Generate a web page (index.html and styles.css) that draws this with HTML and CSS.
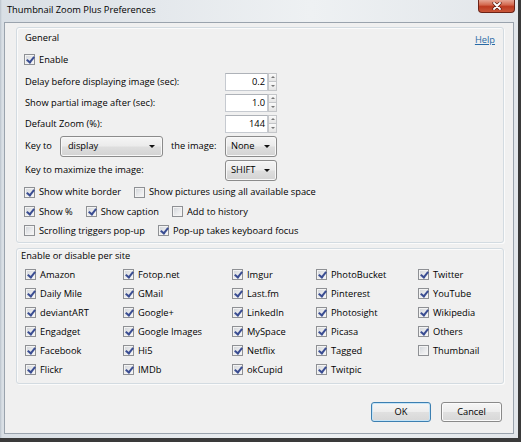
FILE: index.html
```html
<!DOCTYPE html>
<html>
<head>
<meta charset="utf-8">
<title>Thumbnail Zoom Plus Preferences</title>
<link rel="stylesheet" href="styles.css">
</head>
<body>
<div class="window">
  <div class="titlebar">
    <span class="title">Thumbnail Zoom Plus Preferences</span>
    <span class="close">
      <svg width="10" height="8" viewBox="0 0 10 8"><path d="M2 1 L8 7 M8 1 L2 7" stroke="#5a1a10" stroke-width="3.2" stroke-linecap="round"/><path d="M2 1 L8 7 M8 1 L2 7" stroke="#ffffff" stroke-width="1.8" stroke-linecap="round"/></svg>
    </span>
  </div>
  <div class="client">
    <div class="group general">
      <div class="caption-row"><span class="caption">General</span><span class="help">Help</span></div>
      <div class="enable-row"><span class="check"><span class="cb on"></span>Enable</span></div>
      <div class="frow"><span class="lbl">Delay before displaying image (sec):</span><span class="num"><span class="field">0.2</span><span class="spin"><i class="up"></i><i class="down"></i></span></span></div>
      <div class="frow"><span class="lbl">Show partial image after (sec):</span><span class="num"><span class="field">1.0</span><span class="spin"><i class="up"></i><i class="down"></i></span></span></div>
      <div class="frow"><span class="lbl">Default Zoom (%):</span><span class="num"><span class="field">144</span><span class="spin"><i class="up"></i><i class="down"></i></span></span></div>
      <div class="frow tall">
        <span class="lbl keycell"><span>Key to</span><span class="select sel-display"><span>display</span><span class="arrow"></span></span><span>the image:</span></span>
        <span class="select sel-small"><span>None</span><span class="arrow"></span></span>
      </div>
      <div class="frow tall"><span class="lbl">Key to maximize the image:</span><span class="select sel-small"><span>SHIFT</span><span class="arrow"></span></span></div>
      <div class="cbrow r1"><span class="check"><span class="cb on"></span>Show white border</span><span class="check"><span class="cb"></span>Show pictures using all available space</span></div>
      <div class="cbrow"><span class="check"><span class="cb on"></span>Show %</span><span class="check"><span class="cb on"></span>Show caption</span><span class="check"><span class="cb"></span>Add to history</span></div>
      <div class="cbrow"><span class="check"><span class="cb"></span>Scrolling triggers pop-up</span><span class="check"><span class="cb on"></span>Pop-up takes keyboard focus</span></div>
    </div>
    <div class="group sites">
      <div class="sites-caption">Enable or disable per site</div>
      <div class="site-grid">
        <span class="check"><span class="cb on"></span>Amazon</span>
        <span class="check"><span class="cb on"></span>Daily Mile</span>
        <span class="check"><span class="cb on"></span>deviantART</span>
        <span class="check"><span class="cb on"></span>Engadget</span>
        <span class="check"><span class="cb on"></span>Facebook</span>
        <span class="check"><span class="cb on"></span>Flickr</span>
        <span class="check"><span class="cb on"></span>Fotop.net</span>
        <span class="check"><span class="cb on"></span>GMail</span>
        <span class="check"><span class="cb on"></span>Google+</span>
        <span class="check"><span class="cb on"></span>Google Images</span>
        <span class="check"><span class="cb on"></span>Hi5</span>
        <span class="check"><span class="cb on"></span>IMDb</span>
        <span class="check"><span class="cb on"></span>Imgur</span>
        <span class="check"><span class="cb on"></span>Last.fm</span>
        <span class="check"><span class="cb on"></span>LinkedIn</span>
        <span class="check"><span class="cb on"></span>MySpace</span>
        <span class="check"><span class="cb on"></span>Netflix</span>
        <span class="check"><span class="cb on"></span>okCupid</span>
        <span class="check"><span class="cb on"></span>PhotoBucket</span>
        <span class="check"><span class="cb on"></span>Pinterest</span>
        <span class="check"><span class="cb on"></span>Photosight</span>
        <span class="check"><span class="cb on"></span>Picasa</span>
        <span class="check"><span class="cb on"></span>Tagged</span>
        <span class="check"><span class="cb on"></span>Twitpic</span>
        <span class="check"><span class="cb on"></span>Twitter</span>
        <span class="check"><span class="cb on"></span>YouTube</span>
        <span class="check"><span class="cb on"></span>Wikipedia</span>
        <span class="check"><span class="cb on"></span>Others</span>
        <span class="check"><span class="cb"></span>Thumbnail</span>
      </div>
    </div>
    <div class="buttons">
      <span class="btn btn-default">OK</span>
      <span class="btn">Cancel</span>
    </div>
  </div>
</div>
</body>
</html>
```

FILE: styles.css
```css
* { box-sizing: border-box; }
html, body { margin: 0; padding: 0; }
body {
  background: #ffffff;
  width: 524px;
  height: 444px;
  overflow: hidden;
  font-family: "Open Sans", "Noto Sans", sans-serif;
  font-size: 9.3px;
  line-height: 12px;
  color: #000;
}
.window {
  width: 521px;
  height: 442px;
  border-right: 3px solid #3a3a3a;
  border-bottom: 4px solid #3a3a3a;
  background: linear-gradient(to right, #b9c2cb 0, #d9dfe5 2px, #e4e8ec 30%, #eef1f3 60%, #e2e6ea 100%);
  display: flex;
  flex-direction: column;
}
.titlebar {
  height: 22px;
  flex: none;
  display: flex;
  align-items: flex-start;
  padding-left: 7px;
}
.title { margin-top: 4px; color: #000; }
.close {
  margin-left: auto;
  margin-right: 3px;
  width: 37px;
  height: 13px;
  border: 1px solid #6b2216;
  border-top: none;
  border-radius: 0 0 4px 4px;
  background: linear-gradient(#e6a594 0, #d46a50 40%, #bd3a20 55%, #c9573a 100%);
  display: flex;
  align-items: center;
  justify-content: center;
}
.close svg { display: block; }
.client {
  margin-left: 4px;
  width: 510px;
  height: 412px;
  flex: none;
  border: 1px solid #9aa3ad;
  background: #f0f0f0;
  padding: 4px 9px 0 11px;
  display: flex;
  flex-direction: column;
}
.group {
  border: 1px solid #d3dbe1;
  border-radius: 3px;
  box-shadow: inset 1px 1px 0 #fbfbfb, 1px 1px 0 #fbfbfb;
  padding: 0 8px 0 7px;
}
.general { height: 216px; flex: none; }
.caption-row {
  height: 20px;
  display: flex;
  align-items: center;
  justify-content: space-between;
}
.caption { margin-left: 1px; }
.help {
  color: #2a6aa5;
  text-decoration: underline;
  margin-top: 4px;
}
.enable-row { height: 23px; display: flex; align-items: center; }
.frow { height: 21px; display: flex; align-items: center; }
.frow.tall { height: 24px; }
.lbl { flex: 0 0 201px; padding-left: 1px; }
.keycell { display: flex; align-items: center; gap: 8px; }
.num { display: flex; align-items: center; }
.field {
  width: 43px;
  height: 18px;
  border: 1px solid #c6cad0;
  border-top-color: #aeb2b8;
  background: #fff;
  text-align: right;
  padding-right: 2px;
  line-height: 16px;
}
.spin {
  width: 9px;
  height: 18px;
  display: flex;
  flex-direction: column;
}
.spin i {
  flex: 1;
  border: 1px solid #c4c6c9;
  background: linear-gradient(#fafafa, #e4e4e4);
  display: flex;
  align-items: center;
  justify-content: center;
}
.spin i.down { border-top: none; }
.spin i::after {
  content: "";
  width: 0;
  height: 0;
  border-left: 2px solid transparent;
  border-right: 2px solid transparent;
}
.spin i.up::after { border-bottom: 2px solid #777; }
.spin i.down::after { border-top: 2px solid #777; }
.select {
  height: 21px;
  border: 1px solid #8b8b8b;
  border-radius: 3px;
  background: linear-gradient(#f5f5f5 0, #ebebeb 48%, #dedede 52%, #d3d3d3 100%);
  box-shadow: inset 0 0 0 1px #f8f8f8;
  display: flex;
  align-items: center;
  justify-content: space-between;
  color: #000;
}
.sel-display { width: 103px; padding: 0 7px 0 7px; }
.sel-small { width: 52px; padding: 0 6px 0 5px; }
.arrow {
  width: 0;
  height: 0;
  border-left: 3px solid transparent;
  border-right: 3px solid transparent;
  border-top: 3px solid #111;
}
.cbrow { height: 19px; display: flex; align-items: center; gap: 13px; }
.cbrow.r1 { height: 20px; }
.check { display: inline-flex; align-items: center; white-space: nowrap; }
.cb {
  position: relative;
  flex: none;
  width: 11px;
  height: 11px;
  margin-right: 4px;
  border: 1px solid #8e9094;
  background: linear-gradient(135deg, #cfd3d8 0, #e9eaec 55%, #f8f8f8 100%);
  box-shadow: inset 0 0 0 1px #f3f3f3;
}
.cb.on::after {
  content: "";
  position: absolute;
  left: 3px;
  top: 0px;
  width: 3px;
  height: 6px;
  border: solid #3a4d92;
  border-width: 0 2px 2px 0;
  transform: rotate(38deg);
}
.sites { margin-top: 5px; height: 136px; flex: none; padding-bottom: 4px; }
.sites-caption { height: 14px; line-height: 14px; margin-left: -3px; }
.site-grid {
  margin-top: 2px;
  margin-left: 1px;
  display: grid;
  grid-template-columns: 98px 109px 84px 102px 1fr;
  grid-template-rows: repeat(6, 19px);
  grid-auto-flow: column;
  align-items: center;
}
.buttons {
  margin-top: 18px;
  margin-right: 2px;
  display: flex;
  justify-content: flex-end;
  gap: 10px;
}
.btn {
  width: 61px;
  height: 20px;
  border: 1px solid #8a8a8a;
  border-radius: 3px;
  background: linear-gradient(#f6f6f6 0, #ededed 48%, #e0e0e0 52%, #d7d7d7 100%);
  box-shadow: inset 0 0 0 1px #fbfbfb;
  display: flex;
  align-items: center;
  justify-content: center;
  color: #000;
}
.btn-default {
  width: 60px;
  border-color: #3c7fb1;
  box-shadow: inset 0 0 0 1px #c5e4f7;
}
```
